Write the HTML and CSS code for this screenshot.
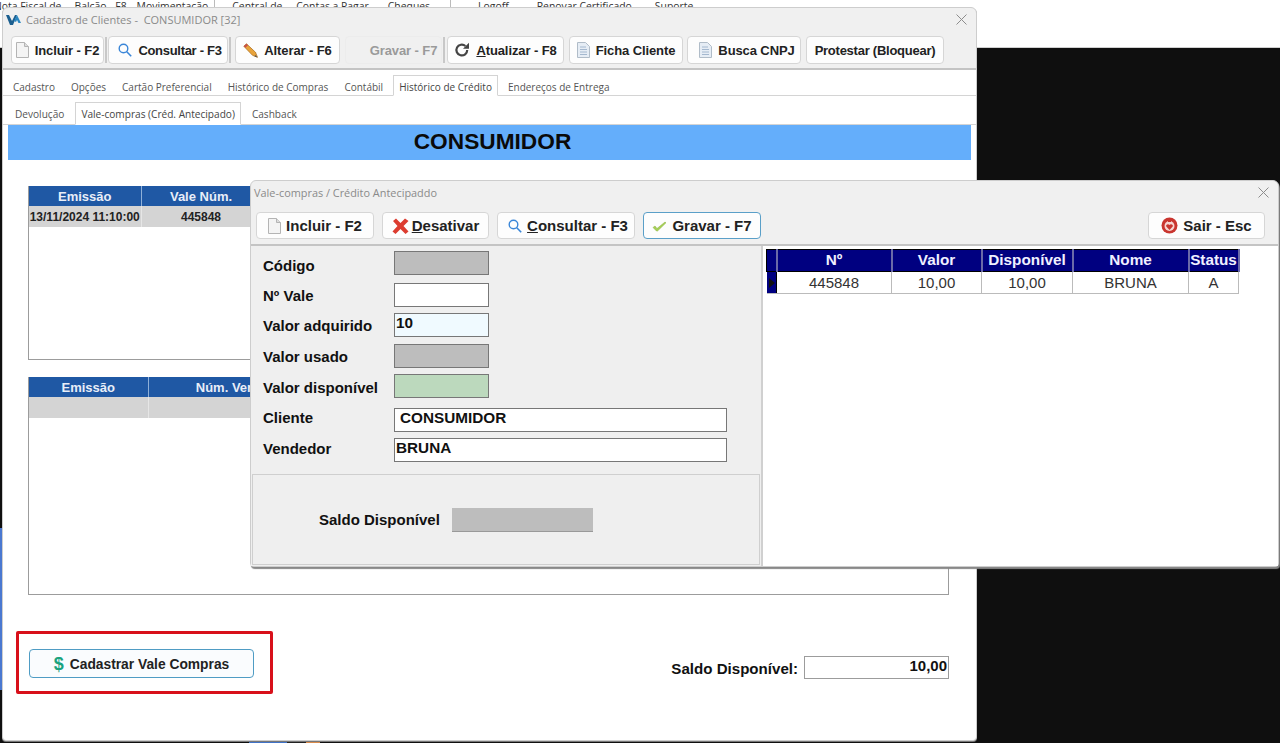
FILE: index.html
```html
<!DOCTYPE html>
<html lang="pt-BR">
  <head>
    <meta charset="utf-8">
    <title>Cadastro de Clientes</title>
    <link rel="stylesheet" href="styles.css">
  </head>
  <body>
    <div class="menu-bar">
      <span class="menu-item m-nota">Nota Fiscal de</span>
      <span class="menu-item m-balcao">Balcão - F8</span>
      <span class="menu-item m-mov">Movimentação</span>
      <span class="menu-sep m-sep1"></span>
      <span class="menu-item m-central">Central de</span>
      <span class="menu-item m-contas">Contas a Pagar</span>
      <span class="menu-item m-cheques">Cheques</span>
      <span class="menu-sep m-sep2"></span>
      <span class="menu-item m-logoff">Logoff</span>
      <span class="menu-item m-renovar">Renovar Certificado</span>
      <span class="menu-item m-suporte">Suporte</span>
    </div>

    <div class="left-strip"></div>

    <div class="bottom-strip">
      <span class="chip chip-blue"></span>
      <span class="chip chip-dark"></span>
      <span class="chip chip-orange"></span>
      <span class="chip chip-bar"></span>
      <span class="chip chip-bar"></span>
      <span class="chip chip-bar"></span>
      <span class="chip chip-bar"></span>
      <span class="chip chip-bar"></span>
    </div>

    <!-- janela principal -->
    <div class="window main-window">
      <div class="title-bar">
        <svg class="logo" width="15" height="11" viewBox="0 0 15 11"><path d="M0 1h3l3 6 3-6 2 0-4 10H4z" fill="#1c5f8f"/><path d="M8 7l3-6 4 8h-2.500l-1.500-3-1 2z" fill="#2a86c0"/></svg>
        <span class="title-text">Cadastro de Clientes -&nbsp; CONSUMIDOR [32]</span>
        <svg class="close-x" width="11" height="11" viewBox="0 0 11 11"><path d="M.5.500l10 10M10.500.500l-10 10" stroke="#8c8c8c" fill="none"/></svg>
      </div>

      <div class="toolbar main-toolbar">
        <button class="btn b-incluir">
          <svg width="13" height="16" viewBox="0 0 13 16"><path d="M.5.500h8l4 4v11H.5z" fill="#f4f4f4" stroke="#b4b4b4"/><path d="M8.500.500v4h4" fill="#ddd" stroke="#b4b4b4"/></svg>
          Incluir - F2
        </button>
        <span class="tb-sep"></span>
        <button class="btn b-consultar">
          <svg width="14" height="14" viewBox="0 0 14 14"><circle cx="5.500" cy="5.500" r="4.300" fill="none" stroke="#3a86d8" stroke-width="1.400"/><path d="M8.800 8.800l4.400 4.400" stroke="#3a86d8" stroke-width="1.600"/></svg>
          Consultar - F3
        </button>
        <span class="tb-sep"></span>
        <button class="btn b-alterar">
          <svg width="15" height="15" viewBox="0 0 15 15"><path d="M3.500.800l9 8.500 2 5-5-2L.8 3.200z" fill="#e8a33a" stroke="#a86a1a" stroke-width=".7"/><path d="M.8 3.200L3.500.8l1.500 1.400-2.600 2.500z" fill="#c9504a"/><path d="M12.500 12l2 2.500-3-1z" fill="#555"/></svg>
          Alterar - F6
        </button>
        <button class="btn b-gravar disabled">Gravar - F7</button>
        <span class="tb-sep"></span>
        <button class="btn b-atualizar">
          <svg width="16" height="16" viewBox="0 0 16 16"><path d="M13.200 8a5.400 5.400 0 1 1-1.800-4" fill="none" stroke="#444" stroke-width="2.200"/><path d="M15 .800v6h-6z" fill="#444"/></svg>
          <span><u>A</u>tualizar - F8</span>
        </button>
        <button class="btn b-ficha">
          <svg width="13" height="16" viewBox="0 0 13 16"><path d="M.5.500h8l4 4v11H.5z" fill="#e6edf5" stroke="#b0bcc8"/><path d="M3 5h6M3 7.500h7M3 10h7M3 12.500h7" stroke="#a4b8cf"/></svg>
          Ficha Cliente
        </button>
        <button class="btn b-busca">
          <svg width="13" height="16" viewBox="0 0 13 16"><path d="M.5.500h8l4 4v11H.5z" fill="#e6edf5" stroke="#b0bcc8"/><path d="M3 5h6M3 7.500h7M3 10h7M3 12.500h7" stroke="#a4b8cf"/></svg>
          Busca CNPJ
        </button>
        <button class="btn b-protestar">Protestar (Bloquear)</button>
      </div>

      <div class="content">
        <div class="tabs">
          <span class="tab">Cadastro</span>
          <span class="tab">Opções</span>
          <span class="tab">Cartão Preferencial</span>
          <span class="tab">Histórico de Compras</span>
          <span class="tab">Contábil</span>
          <span class="tab active">Histórico de Crédito</span>
          <span class="tab">Endereços de Entrega</span>
        </div>
        <div class="tabs sub-tabs">
          <span class="tab">Devolução</span>
          <span class="tab active">Vale-compras (Créd. Antecipado)</span>
          <span class="tab">Cashback</span>
        </div>

        <div class="banner">CONSUMIDOR</div>

        <div class="grid-box box-vales">
          <table class="blue-grid">
            <tr><th class="c-emissao1">Emissão</th><th class="c-vale">Vale Núm.</th><th></th></tr>
            <tr><td>13/11/2024 11:10:00</td><td>445848</td><td></td></tr>
          </table>
        </div>

        <div class="grid-box box-vendas">
          <table class="blue-grid">
            <tr><th class="c-emissao2">Emissão</th><th class="c-venda">Núm. Venda</th><th></th></tr>
            <tr><td>&nbsp;</td><td></td><td></td></tr>
          </table>
        </div>

        <div class="footer">
          <div class="red-box">
            <button class="btn btn-cadastrar"><span class="dollar">$</span> Cadastrar Vale Compras</button>
          </div>
          <div class="saldo">
            <span class="saldo-label">Saldo Disponível:</span>
            <span class="saldo-value">10,00</span>
          </div>
        </div>
      </div>
    </div>

    <!-- janela do vale-compras -->
    <div class="window modal">
      <div class="title-bar modal-title">
        <span class="title-text">Vale-compras / Crédito Antecipaddo</span>
        <svg class="close-x" width="11" height="11" viewBox="0 0 11 11"><path d="M.5.500l10 10M10.500.500l-10 10" stroke="#8c8c8c" fill="none"/></svg>
      </div>

      <div class="toolbar modal-toolbar">
        <button class="btn mb-incluir">
          <svg width="13" height="16" viewBox="0 0 13 16"><path d="M.5.500h8l4 4v11H.5z" fill="#f4f4f4" stroke="#b4b4b4"/><path d="M8.500.500v4h4" fill="#ddd" stroke="#b4b4b4"/></svg>
          Incluir - F2
        </button>
        <button class="btn mb-desativar">
          <svg width="17" height="16" viewBox="0 0 17 16"><path d="M1 3l3-2.500 4.500 4.500L13 .5l3.500 2.500L11.500 8l5 5.500-3 2.500-5-5-5 5-3-2.500 5-5.500z" fill="#dc3c30"/></svg>
          <span><u>D</u>esativar</span>
        </button>
        <button class="btn mb-consultar">
          <svg width="14" height="14" viewBox="0 0 14 14"><circle cx="5.500" cy="5.500" r="4.300" fill="none" stroke="#3a86d8" stroke-width="1.400"/><path d="M8.800 8.800l4.400 4.400" stroke="#3a86d8" stroke-width="1.600"/></svg>
          <span><u>C</u>onsultar - F3</span>
        </button>
        <button class="btn mb-gravar">
          <svg width="15" height="12" viewBox="0 0 15 12"><path d="M1 7.500l2-1.500 2 2.500L13 2l1 .8L5.500 11H4.500z" fill="#a6d055" stroke="#8ab040" stroke-width=".5"/></svg>
          Gravar - F7
        </button>
        <button class="btn mb-sair">
          <svg width="17" height="17" viewBox="0 0 17 17"><circle cx="8.500" cy="8.500" r="8" fill="#c9352f"/><circle cx="8.500" cy="9" r="5" fill="#f5d5d2"/><path d="M8.500 13l-3.200-3.500c-1-1.500 1.800-3.500 3.200-1.500 1.400-2 4.200 0 3.200 1.500z" fill="#c9352f"/><path d="M8.500 1v4" stroke="#c9352f" stroke-width="3"/></svg>
          Sair - Esc
        </button>
      </div>

      <div class="modal-body">
        <div class="form-panel">
          <div class="form-rows">
            <div class="row"><label>Código</label><span class="input short gray"></span></div>
            <div class="row"><label>Nº Vale</label><span class="input short"></span></div>
            <div class="row"><label>Valor adquirido</label><span class="input short focus">10</span></div>
            <div class="row"><label>Valor usado</label><span class="input short gray"></span></div>
            <div class="row"><label>Valor disponível</label><span class="input short green"></span></div>
            <div class="row"><label>Cliente</label><span class="input long pad">CONSUMIDOR</span></div>
            <div class="row"><label>Vendedor</label><span class="input long">BRUNA</span></div>
          </div>
          <div class="saldo-panel">
            <label>Saldo Disponível</label>
            <span class="saldo-input"></span>
          </div>
        </div>

        <div class="list-panel">
          <table class="navy-grid">
            <tr>
              <th class="n-ind"></th><th class="n-num">Nº</th><th class="n-val">Valor</th>
              <th class="n-disp">Disponível</th><th class="n-nome">Nome</th><th class="n-stat">Status</th>
            </tr>
            <tr>
              <td class="ind"><span class="arrow"></span></td><td>445848</td><td>10,00</td>
              <td>10,00</td><td>BRUNA</td><td>A</td>
            </tr>
          </table>
        </div>
      </div>
    </div>
  </body>
</html>
```

FILE: styles.css
```css
* {
  box-sizing: border-box;
}

html, body {
  margin: 0;
  height: 743px;
  overflow: hidden;
}

body {
  background-color: #0f0f0f;
  position: relative;
  font-family: "Liberation Sans", Arial, sans-serif;
  color: #111;
}

/* sistema por tras das janelas */
.menu-bar {
  height: 48px;
  background-color: #fff;
  border-bottom: 1px solid #cfcfcf;
  display: flex;
  align-items: flex-start;
  font-family: "Open Sans", sans-serif;
  font-size: 10.4px;
  line-height: 12px;
  color: #333;
  overflow: hidden;
}

.menu-item {
  white-space: nowrap;
}

.menu-sep {
  width: 1px;
  height: 8px;
  background-color: #bbb;
}

.m-nota { margin-left: -6px; }
.m-balcao { margin-left: 13px; }
.m-mov { margin-left: 10px; }
.m-sep1 { margin-left: 6px; }
.m-central { margin-left: 17px; }
.m-contas { margin-left: 14px; }
.m-cheques { margin-left: 19px; }
.m-sep2 { margin-left: 20px; }
.m-logoff { margin-left: 27px; }
.m-renovar { margin-left: 28px; }
.m-suporte { margin-left: 23px; }

.left-strip {
  position: absolute;
  left: 0;
  top: 528px;
  width: 2px;
  height: 162px;
  background-color: #4a78d0;
}

.bottom-strip {
  position: absolute;
  left: 249px;
  top: 741px;
  height: 2px;
  display: flex;
}

.chip { height: 2px; display: block; }
.chip-blue { width: 38px; background-color: #3f72c8; }
.chip-dark { width: 19px; background-color: #222; }
.chip-orange { width: 14px; background-color: #d98a4a; margin-right: 10px; }
.chip-bar { width: 36px; background-color: #111; margin-right: 8px; }

/* janelas */
.window {
  position: absolute;
  background-color: #f0f0f0;
  border: 1px solid #cdcdcd;
  border-radius: 6px 6px 4px 4px;
}

.main-window {
  left: 2px;
  top: 7px;
  width: 975px;
  height: 734px;
  box-shadow: 0 1px 0 #777;
}

.modal {
  left: 250px;
  top: 180px;
  width: 1029px;
  height: 387px;
  box-shadow: 1px 2px 1px #888;
}

.title-bar {
  height: 24px;
  padding-bottom: 2px;
  display: flex;
  align-items: center;
  position: relative;
  font-family: "Open Sans", sans-serif;
  font-size: 11px;
  color: #8a8a8a;
}

.logo {
  margin-left: 3px;
  margin-right: 5px;
}

.close-x {
  position: absolute;
  right: 9px;
  top: 6px;
}

.modal-title .title-text {
  margin-left: 3px;
  font-size: 10.9px;
}

.toolbar {
  display: flex;
  align-items: flex-start;
  border-bottom: 2px solid #c4c4c4;
}

.main-toolbar {
  height: 38px;
  padding: 4px 0 0 8px;
}

.modal-toolbar {
  height: 41px;
  padding: 7px 0 0 5px;
}

.btn {
  height: 28px;
  display: flex;
  align-items: center;
  justify-content: center;
  gap: 6px;
  padding: 0;
  background-color: #fdfdfd;
  border: 1px solid #d6d6d6;
  border-radius: 4px;
  font-family: "Liberation Sans", Arial, sans-serif;
  font-weight: bold;
  font-size: 13px;
  letter-spacing: -0.1px;
  color: #222;
  white-space: nowrap;
}

.btn.disabled {
  background-color: #f0f0f0;
  border-color: #ececec;
  color: #9a9a9a;
}

.tb-sep {
  width: 2px;
  height: 26px;
  margin: 1px 1px 0 1px;
  background-color: #c8c8c8;
}

.b-incluir { width: 93px; }
.b-consultar { width: 120px; padding-left: 4px; letter-spacing: -0.3px; }
.b-alterar { width: 105px; margin-left: 3px; margin-right: 5px; }
.b-gravar { width: 97px; padding-left: 20px; }
.b-atualizar { width: 117px; margin-left: 1px; margin-right: 5px; }
.b-ficha { width: 114px; margin-right: 4px; }
.b-busca { width: 114px; margin-right: 5px; padding-left: 6px; }
.b-protestar { width: 138px; letter-spacing: -0.25px; }

.modal-toolbar .btn {
  height: 27px;
  font-size: 15px;
  gap: 5px;
  letter-spacing: 0;
}

.mb-incluir { width: 118px; margin-right: 8px; }
.mb-desativar { width: 107px; margin-right: 8px; gap: 3px !important; }
.mb-consultar { width: 138px; margin-right: 8px; padding-left: 4px; }
.mb-gravar { width: 118px; border-color: #5a9fc8 !important; }
.mb-sair { width: 117px; margin-left: 387px; }

/* abas */
.content {
  background-color: #fff;
  height: 670px;
  border-radius: 0 0 4px 4px;
}

.tabs {
  height: 26px;
  display: flex;
  align-items: flex-end;
  border-bottom: 1px solid #d4d4d4;
  font-family: "Open Sans", sans-serif;
  font-size: 10px;
  color: #555;
  padding-left: 4px;
}

.tab {
  height: 21px;
  padding: 0 6px;
  margin-right: 4px;
  line-height: 26px;
  white-space: nowrap;
}

.tab.active {
  background-color: #fff;
  border: 1px solid #d4d4d4;
  border-bottom: 1px solid #fff;
  padding: 0 5px;
  margin-bottom: -1px;
  line-height: 23px;
  color: #444;
}

.sub-tabs {
  height: 29px;
  padding-left: 6px;
  font-size: 10.1px;
}

.sub-tabs .tab {
  height: 23px;
  line-height: 26px;
  margin-right: 5px;
}

.sub-tabs .tab.active {
  line-height: 22px;
}

.banner {
  height: 35px;
  margin: 0 5px;
  padding-left: 6px;
  background-color: #64aefb;
  text-align: center;
  font-weight: bold;
  font-size: 22.7px;
  line-height: 33px;
  color: #0a0a0a;
}

/* grades */
.grid-box {
  width: 921px;
  margin-left: 25px;
  background-color: #fff;
  border: 1px solid #9c9c9c;
  border-top: 0;
}

.box-vales {
  margin-top: 26px;
  height: 174px;
}

.box-vendas {
  margin-top: 17px;
  height: 218px;
}

.blue-grid {
  width: 100%;
  border-collapse: collapse;
  table-layout: fixed;
  font-size: 12px;
}

.blue-grid th {
  height: 20px;
  padding: 0;
  background-color: #1f58a4;
  color: #e8eef8;
  font-size: 13px;
  border-right: 1px solid #8fb0d8;
}

.blue-grid td {
  height: 21px;
  background-color: #d4d4d4;
  text-align: center;
  font-weight: bold;
  color: #222;
  border-right: 1px solid #e6e6e6;
  padding: 0;
  white-space: nowrap;
}

.c-emissao1 { width: 112px; }
.c-vale { width: 120px; }
.c-emissao2 { width: 119px; }
.c-venda { width: 170px; }

/* rodape */
.footer {
  display: flex;
  justify-content: space-between;
  align-items: flex-start;
  margin-top: 36px;
  padding: 0 27px 0 13px;
}

.red-box {
  width: 257px;
  height: 63px;
  padding: 15px 0 0 10px;
  border: 3px solid #d8101a;
  border-radius: 2px;
}

.btn-cadastrar {
  width: 225px;
  height: 29px;
  gap: 6px;
  padding-top: 1px;
  font-size: 13.8px;
  letter-spacing: 0;
  background-color: #fafcfe;
  border-color: #4f9cc4;
}

.dollar {
  color: #1aa37f;
  font-size: 18px;
}

.saldo {
  display: flex;
  align-items: center;
  gap: 6px;
  margin-top: 25px;
  font-weight: bold;
  font-size: 15.1px;
}

.saldo-label {
  padding-top: 2px;
}

.saldo-value {
  width: 145px;
  height: 23px;
  border: 1px solid #9c9c9c;
  text-align: right;
  line-height: 18px;
  padding-right: 1px;
  font-size: 15px;
}

/* janela vale-compras */
.modal-body {
  display: flex;
  height: 320px;
  background-color: #fff;
}

.form-panel {
  width: 512px;
  background-color: #efefef;
  border-right: 2px solid #d0d0d0;
}

.form-rows {
  padding: 5px 0 0 12px;
  height: 228px;
}

.row {
  display: flex;
  align-items: center;
  height: 24px;
  margin-bottom: 6px;
}

.row:nth-child(1) { margin-bottom: 8px; }
.row:nth-child(3) { margin-bottom: 7px; }
.row:nth-child(5) { margin-bottom: 10px; }

.row:nth-child(1) label { padding-top: 4px; }
.row:nth-child(5) label { padding-top: 2px; }
.row:nth-child(6) label { padding-bottom: 6px; }
.row:nth-child(7) label { padding-bottom: 4px; }

label {
  width: 131px;
  font-weight: bold;
  font-size: 15px;
}

.input {
  height: 24px;
  border: 1px solid #777;
  background-color: #fff;
  font-weight: bold;
  font-size: 15.3px;
  line-height: 18px;
  padding-left: 1px;
}

.short { width: 95px; }
.long { width: 333px; }
.pad { padding-left: 5px; }
.gray { background-color: #bdbdbd; }
.focus { background-color: #f0faff; }
.green { background-color: #bcd9bd; }

.saldo-panel {
  display: flex;
  align-items: center;
  height: 91px;
  margin: 0 1px 0 1px;
  padding: 0 0 0 66px;
  border: 1px solid #cfcfcf;
}

.saldo-panel label {
  width: 133px;
}

.saldo-input {
  width: 141px;
  height: 24px;
  background-color: #bdbdbd;
  border-bottom: 1px solid #999;
}

.list-panel {
  flex: 1;
  padding: 3px 0 0 3px;
}

.navy-grid {
  border-collapse: collapse;
  table-layout: fixed;
  font-size: 15px;
}

.navy-grid th {
  height: 22px;
  background-color: #000080;
  color: #f0f0ff;
  font-size: 15.3px;
  padding: 0 0 2px;
  border: 1px solid #000;
  border-right: 2px solid #6a6aa8;
}

.navy-grid td {
  height: 22px;
  padding: 0;
  text-align: center;
  color: #333;
  border-right: 1px solid #bbb;
  border-bottom: 1px solid #bbb;
}

.navy-grid td.ind {
  background-color: #000080;
  border-right: 1px solid #000;
  text-align: left;
}

.arrow {
  display: block;
  width: 0;
  height: 0;
  margin-left: 2px;
  border-left: 6px solid #111;
  border-top: 5px solid transparent;
  border-bottom: 5px solid transparent;
}

.n-ind { width: 10px; }
.n-num { width: 115px; }
.n-val { width: 90px; }
.n-disp { width: 91px; }
.n-nome { width: 116px; }
.n-stat { width: 50px; }
```
